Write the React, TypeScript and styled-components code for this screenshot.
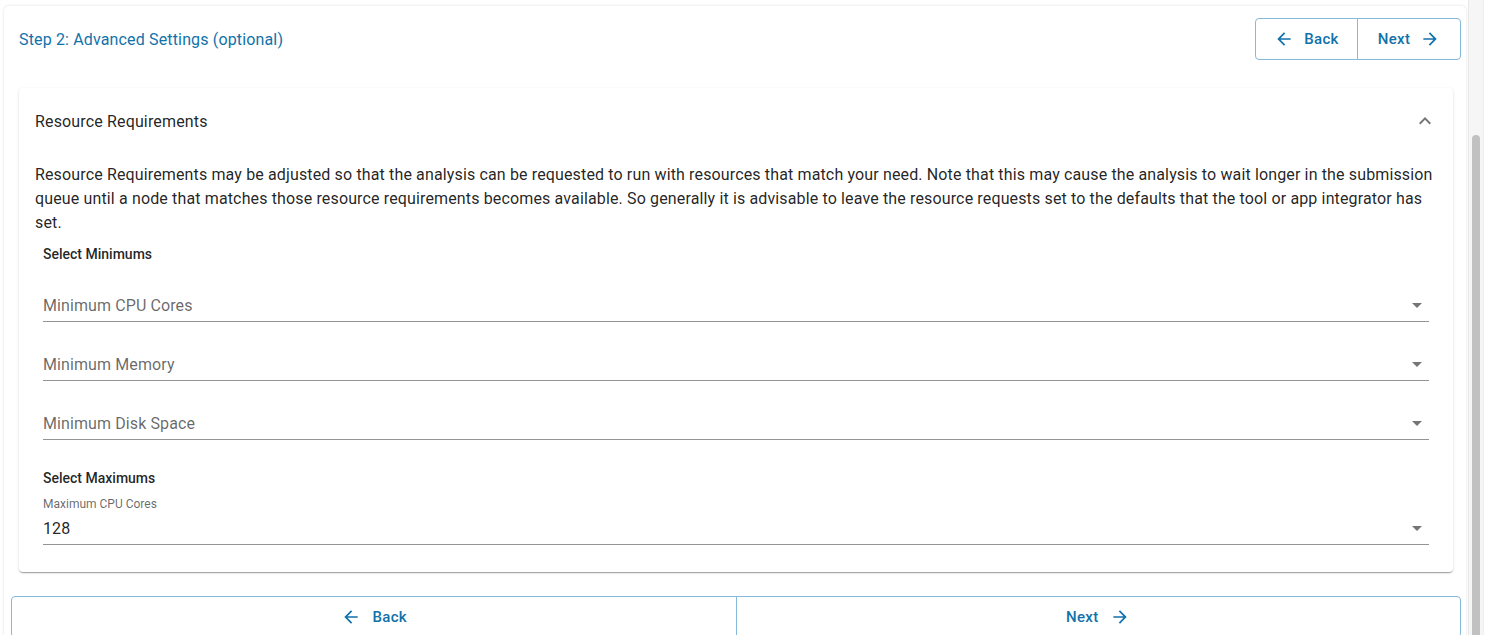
import { createGlobalStyle } from 'styled-components';
import styled from 'styled-components';

const blue = '#1172aa';
const blueBorder = '#84b9d9';

const GlobalStyle = createGlobalStyle`
  html, body {
    margin: 0;
    height: 100%;
    overflow: hidden;
    background: #ffffff;
    font-family: Roboto, 'Liberation Sans', Arial, sans-serif;
  }
`;

const Page = styled.div`
  display: flex;
  height: 100vh;
`;

const Main = styled.div`
  flex: 1;
  min-width: 0;
  padding: 5px 1px 0 3px;
`;

const ScrollTrack = styled.div`
  width: 14px;
  margin-right: 3px;
  display: flex;
  flex-direction: column;
  align-items: center;
  background: #f6f6f6;
  border-left: 1px solid #e8e8e8;
  border-right: 1px solid #eeeeee;
`;

const ScrollThumb = styled.div`
  flex: 1;
  width: 8px;
  margin-top: 135px;
  border-radius: 4px 4px 0 0;
  background: #c1c1c1;
`;

const Paper = styled.div`
  border-radius: 6px;
  box-shadow: 0 0 2px rgba(0, 0, 0, 0.07);
  border: 1px solid #f3f3f3;
  border-bottom: none;
  padding: 12px 5px 0 15px;
`;

const Header = styled.div`
  display: flex;
  align-items: center;
  justify-content: space-between;
  height: 42px;
`;

const StepTitle = styled.div`
  color: ${blue};
  font-size: 16px;
  letter-spacing: 0.15px;
`;

const ButtonGroup = styled.div<{ $full?: boolean }>`
  display: flex;
  height: 42px;
  ${(p) => (p.$full ? 'margin: 24px 0 0 -8px;' : '')}
`;

const NavButton = styled.button<{ $full?: boolean; $first?: boolean }>`
  display: flex;
  align-items: center;
  justify-content: center;
  gap: ${(p) => (p.$full ? 12 : 10)}px;
  ${(p) => (p.$full ? 'flex: 1;' : p.$first ? 'width: 103px;' : 'width: 104px;')}
  padding: 0;
  background: #ffffff;
  color: ${blue};
  font-family: Roboto, 'Liberation Sans', Arial, sans-serif;
  font-size: 15px;
  font-weight: 500;
  letter-spacing: 0.3px;
  border: 1px solid ${blueBorder};
  border-radius: ${(p) => (p.$first ? '4px 0 0 4px' : '0 4px 4px 0')};
  ${(p) => (p.$first ? '' : 'margin-left: -1px;')}
  cursor: pointer;

  svg {
    width: 20px;
    height: 20px;
    fill: ${blue};
  }
`;

const Card = styled.section`
  margin: 28px 8px 0 0;
  border-radius: 4px;
  background: #ffffff;
  box-shadow: 0 2px 1px -1px rgba(0, 0, 0, 0.2), 0 1px 1px 0 rgba(0, 0, 0, 0.14),
    0 1px 3px 0 rgba(0, 0, 0, 0.12);
`;

const Summary = styled.div`
  display: flex;
  align-items: center;
  justify-content: space-between;
  height: 64px;
  padding: 1px 16px 0;
  font-size: 16px;
  letter-spacing: 0.15px;
  color: rgba(0, 0, 0, 0.87);

  svg {
    width: 24px;
    height: 24px;
    fill: rgba(0, 0, 0, 0.54);
  }
`;

const Details = styled.div`
  padding: 10px 16px 27px;
`;

const Description = styled.p`
  margin: 0;
  font-size: 16px;
  line-height: 24px;
  color: rgba(0, 0, 0, 0.87);
  letter-spacing: 0.14px;
`;

const Section = styled.div`
  padding: 0 8px;
`;

const SectionLabel = styled.div<{ $gap: number }>`
  margin-top: ${(p) => p.$gap}px;
  height: 20px;
  line-height: 20px;
  font-size: 14px;
  font-weight: 500;
  color: rgba(0, 0, 0, 0.87);
`;

const Field = styled.div<{ $gap: number }>`
  margin-top: ${(p) => p.$gap}px;
`;

const ShrunkLabel = styled.div`
  height: 17px;
  line-height: 19px;
  font-size: 12px;
  color: rgba(0, 0, 0, 0.6);
`;

const InputRow = styled.div<{ $empty?: boolean }>`
  display: flex;
  align-items: center;
  justify-content: space-between;
  height: 32px;
  border-bottom: 1px solid rgba(0, 0, 0, 0.42);
  font-size: 16px;
  letter-spacing: 0.1px;
  color: ${(p) => (p.$empty ? 'rgba(0, 0, 0, 0.6)' : 'rgba(0, 0, 0, 0.87)')};

  svg {
    width: 24px;
    height: 24px;
    fill: rgba(0, 0, 0, 0.54);
  }
`;

const ArrowBack = () => (
  <svg viewBox="0 0 24 24">
    <path d="M20 11H7.83l5.59-5.59L12 4l-8 8 8 8 1.41-1.41L7.83 13H20v-2z" />
  </svg>
);

const ArrowForward = () => (
  <svg viewBox="0 0 24 24">
    <path d="M12 4l-1.41 1.41L16.17 11H4v2h12.17l-5.58 5.59L12 20l8-8z" />
  </svg>
);

const ExpandLess = () => (
  <svg viewBox="0 0 24 24">
    <path d="M12 8l-6 6 1.41 1.41L12 10.83l4.59 4.58L18 14z" />
  </svg>
);

const DropArrow = () => (
  <svg viewBox="0 0 24 24">
    <path d="M7 10l5 5 5-5z" />
  </svg>
);

const SelectField = ({ label, value, gap }: { label: string; value?: string; gap: number }) => (
  <Field $gap={gap}>
    {value && <ShrunkLabel>{label}</ShrunkLabel>}
    <InputRow $empty={!value}>
      <span>{value ?? label}</span>
      <DropArrow />
    </InputRow>
  </Field>
);

const Nav = ({ full }: { full?: boolean }) => (
  <ButtonGroup $full={full}>
    <NavButton $full={full} $first>
      <ArrowBack />
      Back
    </NavButton>
    <NavButton $full={full}>
      Next
      <ArrowForward />
    </NavButton>
  </ButtonGroup>
);

export default function App() {
  return (
    <Page>
      <GlobalStyle />
      <Main>
        <Paper>
          <Header>
            <StepTitle>Step 2: Advanced Settings (optional)</StepTitle>
            <Nav />
          </Header>
          <Card>
            <Summary>
              <span>Resource Requirements</span>
              <ExpandLess />
            </Summary>
            <Details>
              <Description>
                Resource Requirements may be adjusted so that the analysis can be requested to run
                with resources that match your need. Note that this may cause the analysis to wait
                longer in the submission queue until a node that matches those resource
                requirements becomes available. So generally it is advisable to leave the resource
                requests set to the defaults that the tool or app integrator has set.
              </Description>
              <Section>
                <SectionLabel $gap={9}>Select Minimums</SectionLabel>
                <SelectField label="Minimum CPU Cores" gap={25} />
                <SelectField label="Minimum Memory" gap={26} />
                <SelectField label="Minimum Disk Space" gap={26} />
                <SectionLabel $gap={28}>Select Maximums</SectionLabel>
                <SelectField label="Maximum CPU Cores" value="128" gap={7} />
              </Section>
            </Details>
          </Card>
          <Nav full />
        </Paper>
      </Main>
      <ScrollTrack>
        <ScrollThumb />
      </ScrollTrack>
    </Page>
  );
}
